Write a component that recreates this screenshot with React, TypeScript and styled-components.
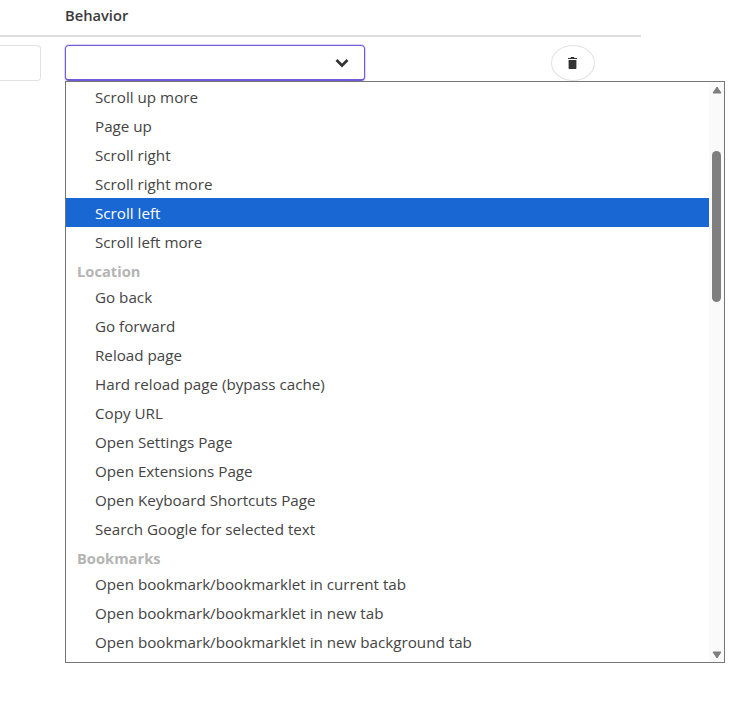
import React from "react";
import styled, { createGlobalStyle } from "styled-components";

const Global = createGlobalStyle`
  html, body { margin: 0; padding: 0; background: #fff; }
  body { font-family: "Open Sans", "Noto Sans", "Liberation Sans", sans-serif; color: #444; overflow: hidden; }
`;

const Page = styled.div`
  width: 750px;
  height: 703px;
  overflow: hidden;
`;

const Table = styled.div`
  width: 641px;
`;

const HeadRow = styled.div`
  height: 35px;
  box-sizing: content-box;
  border-bottom: 2px solid #dedede;
  padding-left: 65px;
  padding-bottom: 0;
`;

const HeadLabel = styled.div`
  font-size: 14.7px;
  line-height: 30px;
  font-weight: 600;
  color: #3a3a3a;
`;

const Row = styled.div`
  display: flex;
  align-items: flex-start;
  padding-top: 8px;
`;

const KeyInput = styled.div`
  width: 41px;
  height: 36px;
  box-sizing: border-box;
  border: 1px solid #e2e2e2;
  border-left: none;
  border-radius: 0 4px 4px 0;
  background: #fff;
  flex: none;
`;

const SelectCell = styled.div`
  width: 300px;
  margin-left: 24px;
  flex: none;
  position: relative;
`;

const SelectBox = styled.div`
  height: 36px;
  box-sizing: border-box;
  border: 1px solid #7259d6;
  border-bottom-width: 2px;
  border-radius: 4px;
  box-shadow: 0 0 0 1px #ddd6f8;
  display: flex;
  align-items: center;
  justify-content: flex-end;
  padding-right: 15px;
  color: #333;
`;

const DeleteButton = styled.button`
  width: 44px;
  height: 36px;
  margin-left: 186px;
  flex: none;
  padding: 0 2px 0 0;
  border: 1px solid #e2e2e2;
  border-radius: 50%;
  background: #fff;
  color: #333;
  display: flex;
  align-items: center;
  justify-content: center;
`;

const Dropdown = styled.div`
  position: absolute;
  left: 0;
  top: 36px;
  width: 660px;
  height: 582px;
  box-sizing: border-box;
  border: 1px solid #767676;
  background: #fff;
  display: flex;
  overflow: hidden;
`;

const Options = styled.div`
  flex: 1;
  min-width: 0;
`;

const Group = styled.div`
  height: 26px;
  line-height: 30px;
  padding-left: 11px;
  font-size: 14.7px;
  font-weight: 700;
  color: #b4b4b4;
`;

const Option = styled.div<{ $selected?: boolean }>`
  height: 29px;
  line-height: 30px;
  padding-left: 29px;
  font-size: 15.2px;
  white-space: nowrap;
  color: ${(p) => (p.$selected ? "#fff" : "#444")};
  background: ${(p) => (p.$selected ? "#1967d2" : "transparent")};
`;

const ScrollTrack = styled.div`
  width: 15px;
  flex: none;
  background: #fafafa;
  display: flex;
  flex-direction: column;
  align-items: center;
`;

const ArrowButton = styled.svg<{ $end?: boolean }>`
  display: block;
  flex: none;
  width: 10px;
  height: 8px;
  fill: #7f7f7f;
  stroke: #7f7f7f;
  stroke-width: 1;
  stroke-linejoin: round;
  margin: ${(p) => (p.$end ? "0 0 3px" : "4px 0 0")};
`;

const ThumbSlot = styled.div`
  flex: 1;
  width: 100%;
  display: flex;
  justify-content: center;
`;

const Thumb = styled.div`
  width: 9px;
  height: 151px;
  margin-top: 57px;
  border-radius: 5px;
  background: #7f7f7f;
`;

type Entry = { group?: string; label?: string; selected?: boolean };

const entries: Entry[] = [
  { label: "Scroll up more" },
  { label: "Page up" },
  { label: "Scroll right" },
  { label: "Scroll right more" },
  { label: "Scroll left", selected: true },
  { label: "Scroll left more" },
  { group: "Location" },
  { label: "Go back" },
  { label: "Go forward" },
  { label: "Reload page" },
  { label: "Hard reload page (bypass cache)" },
  { label: "Copy URL" },
  { label: "Open Settings Page" },
  { label: "Open Extensions Page" },
  { label: "Open Keyboard Shortcuts Page" },
  { label: "Search Google for selected text" },
  { group: "Bookmarks" },
  { label: "Open bookmark/bookmarklet in current tab" },
  { label: "Open bookmark/bookmarklet in new tab" },
  { label: "Open bookmark/bookmarklet in new background tab" },
];

export default function App() {
  return (
    <Page>
      <Global />
      <Table>
        <HeadRow>
          <HeadLabel>Behavior</HeadLabel>
        </HeadRow>
        <Row>
          <KeyInput />
          <SelectCell>
            <SelectBox>
              <svg width="14" height="10" viewBox="0 0 14 10" fill="none" stroke="currentColor" strokeWidth="2.7">
                <path d="M1.5 2 L7 7.5 L12.5 2" />
              </svg>
            </SelectBox>
            <Dropdown>
              <Options>
                {entries.map((e) =>
                  e.group ? (
                    <Group key={e.group}>{e.group}</Group>
                  ) : (
                    <Option key={e.label} $selected={e.selected}>
                      {e.label}
                    </Option>
                  )
                )}
              </Options>
              <ScrollTrack>
                <ArrowButton viewBox="0 0 10 8">
                  <path d="M5 1 L9 7 H1 Z" />
                </ArrowButton>
                <ThumbSlot>
                  <Thumb />
                </ThumbSlot>
                <ArrowButton viewBox="0 0 10 8" $end>
                  <path d="M5 7 L9 1 H1 Z" />
                </ArrowButton>
              </ScrollTrack>
            </Dropdown>
          </SelectCell>
          <DeleteButton aria-label="Delete">
            <svg width="9" height="12" viewBox="0 0 9 12" fill="currentColor">
              <path d="M3 0 H6 L6.5 1 H9 V2 H0 V1 H2.5 Z" />
              <path d="M0.6 3 H8.4 V11 C8.4 11.6 8 12 7.4 12 H1.6 C1 12 0.6 11.6 0.6 11 Z" />
            </svg>
          </DeleteButton>
        </Row>
      </Table>
    </Page>
  );
}
